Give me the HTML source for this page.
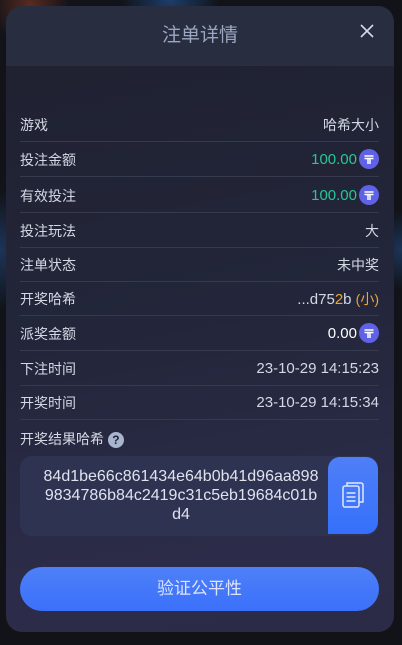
<!DOCTYPE html>
<html><head><meta charset="utf-8"><style>
*{margin:0;padding:0;box-sizing:border-box}
body{width:402px;height:645px;background:#111318;overflow:hidden;font-family:"Liberation Sans","Noto Sans CJK SC",sans-serif;position:relative}
.bg1{position:absolute;left:0;top:0;width:402px;height:645px;background:radial-gradient(circle at 30px 5px,#5a2a20 0,transparent 40px),radial-gradient(circle at 170px 0,#1d3d6a 0,transparent 50px),radial-gradient(circle at 0 250px,#1c3458 0,transparent 60px),radial-gradient(circle at 402px 250px,#1c3458 0,transparent 40px)}
.m{position:absolute;left:6px;top:6px;width:388px;height:626px;border-radius:16px;overflow:hidden;background:linear-gradient(170deg,#1f2130 0%,#23263a 50%,#2c2c4a 85%,#2b2b48 100%)}
.h{height:60px;background:#282d3f;text-align:center;line-height:60px;color:#9aa6c2;font-size:19px}
.x{position:absolute;right:20px;top:18px;width:14px;height:14px}
.row{position:absolute;left:14px;width:359px;height:34px;border-bottom:1px solid #363a4d;color:#d4d8e4;font-size:14px;display:flex;justify-content:space-between;align-items:center}
.v{font-size:15px}
.g{color:#26c797;font-size:15px}
.o{color:#f0a530}
.c{display:inline-block;width:20px;height:20px;border-radius:50%;background:#5f62e6;vertical-align:middle;margin-left:2px;position:relative;top:-1px}
.r{display:flex;align-items:center}
.hb{position:absolute;left:14px;top:450px;width:358px;height:80px;border-radius:12px;background:#2f3352}
.ht{position:absolute;left:20px;top:11px;width:282px;text-align:center;color:#e0e3ee;font-size:16px;line-height:19px;word-break:break-all}
.cp{position:absolute;right:0;top:1px;width:50px;height:77px;border-radius:12px 12px 12px 0;background:linear-gradient(#4f7ff8,#3570fa)}
.btn{position:absolute;left:14px;top:561px;width:359px;height:44px;border-radius:22px;background:linear-gradient(#4e80f8,#3b70fa);color:#dce4ff;text-align:center;line-height:44px;font-size:17px}
</style></head><body><div class="bg1"></div>
<div class="m">
<div class="h">注单详情</div>
<svg class="x" viewBox="0 0 14 14"><path d="M1 1L13 13M13 1L1 13" stroke="#d5dae6" stroke-width="1.6"/></svg>
<div class="row" style="top:102px"><span>游戏</span><span>哈希大小</span></div>
<div class="row" style="top:137px"><span>投注金额</span><span class="r"><span class="g">100.00</span><span class="c"><svg width="20" height="20" viewBox="0 0 20 20"><path d="M5.5 7h9M5.5 9.5h9M9 9.5v5.5M11 9.5v5.5" stroke="#fff" stroke-width="1.5"/></svg></span></span></div>
<div class="row" style="top:173px"><span>有效投注</span><span class="r"><span class="g">100.00</span><span class="c"><svg width="20" height="20" viewBox="0 0 20 20"><path d="M5.5 7h9M5.5 9.5h9M9 9.5v5.5M11 9.5v5.5" stroke="#fff" stroke-width="1.5"/></svg></span></span></div>
<div class="row" style="top:208px"><span>投注玩法</span><span>大</span></div>
<div class="row" style="top:242px"><span>注单状态</span><span>未中奖</span></div>
<div class="row" style="top:276px"><span>开奖哈希</span><span class="v">...d75<span class="o">2</span>b <span class="o" style="font-size:14px">(小)</span></span></div>
<div class="row" style="top:311px"><span>派奖金额</span><span class="r"><span style="font-size:15px;color:#fff">0.00</span><span class="c"><svg width="20" height="20" viewBox="0 0 20 20"><path d="M5.5 7h9M5.5 9.5h9M9 9.5v5.5M11 9.5v5.5" stroke="#fff" stroke-width="1.5"/></svg></span></span></div>
<div class="row" style="top:346px"><span>下注时间</span><span class="v">23-10-29 14:15:23</span></div>
<div class="row" style="top:380px"><span>开奖时间</span><span class="v">23-10-29 14:15:34</span></div>
<div style="position:absolute;left:14px;top:423px;color:#d4d8e4;font-size:14px">开奖结果哈希 <span style="display:inline-block;width:16px;height:16px;border-radius:50%;background:#a9b4cf;color:#1f2130;font-size:12px;line-height:16px;text-align:center;font-weight:bold">?</span></div>
<div class="hb"><div class="ht">84d1be66c861434e64b0b41d96aa898 9834786b84c2419c31c5eb19684c01b d4</div>
<div class="cp"><svg width="50" height="77" viewBox="0 0 50 77"><rect x="15" y="29" width="16" height="21" rx="2" fill="none" stroke="#dfe8ff" stroke-width="1.5"/><path d="M19 29v-3h14a2 2 0 0 1 2 2v17h-4" fill="none" stroke="#dfe8ff" stroke-width="1.5"/><path d="M18.5 36h9M18.5 40h9M18.5 44h9" stroke="#dfe8ff" stroke-width="1.4"/></svg></div></div>
<div class="btn">验证公平性</div>
</div>
</body></html>
